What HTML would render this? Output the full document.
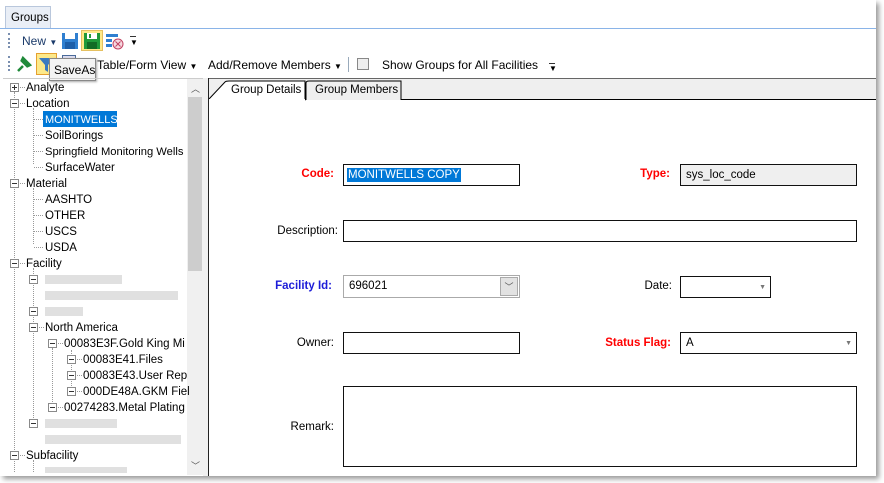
<!DOCTYPE html>
<html><head><meta charset="utf-8"><style>
*{margin:0;padding:0;box-sizing:border-box}
body{width:884px;height:483px;background:#fff;font-family:"Liberation Sans",sans-serif;font-size:12px;color:#000;position:relative;overflow:hidden}
.a{position:absolute;white-space:nowrap}
.t{position:absolute;white-space:nowrap;font-size:11.5px;line-height:14px;margin-top:1px}
.box{position:absolute;width:9px;height:9px;border:1px solid #8a8a8a;background:#fff}
.box:after{content:"";position:absolute;left:1px;top:3px;width:5px;height:1px;background:#333}
.plus:before{content:"";position:absolute;left:3px;top:1px;width:1px;height:5px;background:#333}
.vd{position:absolute;width:0;border-left:1px dotted #999}
.hd{position:absolute;height:0;border-top:1px dotted #999}
.blur{position:absolute;background:#d8d8d8;height:9px;opacity:.8}
.lbl{position:absolute;text-align:right;white-space:nowrap;font-size:11.5px;margin-top:1px}
.in{position:absolute;border:1px solid #111;background:#fff;font-size:11.5px;padding-left:5px;line-height:21px}
.red{color:#f00;font-weight:bold}
.blue{color:#1c1cd8;font-weight:bold}
</style></head><body>
<div class="a" style="left:0;top:0;width:876px;height:476px;box-shadow:3px 3px 5px #999;background:#fff"></div>
<div class="a" style="left:5px;top:6px;width:46px;height:22px;background:#e9eef6;border:1px solid #b9c7dc;border-bottom:none"></div>
<div class="a" style="left:11px;top:12px;font-size:11.5px">Groups</div>
<div class="a" style="left:0;top:28px;width:876px;height:1px;background:#8ab4e8"></div>
<div class="a" style="left:8px;top:33px;width:2px;height:15px;border-left:2px dotted #7a8fb0"></div>
<div class="a" style="left:22px;top:34px;font-size:12px;color:#1a3a6a">New <span style="font-size:8px">▼</span></div>
<svg class="a" style="left:61px;top:32px" width="18" height="18"><rect x="1" y="1" width="16" height="16" fill="#2f7fd0"/><rect x="4" y="1" width="10" height="6" fill="#fff"/><rect x="4" y="10" width="10" height="7" fill="#1d5ea8"/></svg>
<div class="a" style="left:81px;top:30px;width:22px;height:21px;background:#fde98a;border:1px solid #e5c060"></div>
<svg class="a" style="left:83px;top:32px" width="18" height="18"><rect x="1" y="1" width="16" height="16" fill="#1f9a3a"/><rect x="4" y="1" width="10" height="6" fill="#fff"/><rect x="6" y="2" width="2" height="4" fill="#1f9a3a"/><rect x="4" y="10" width="10" height="7" fill="#126b25"/></svg>
<svg class="a" style="left:105px;top:32px" width="20" height="18"><rect x="1" y="2" width="12" height="3" fill="#2f7fd0"/><rect x="1" y="7" width="6" height="3" fill="#2f7fd0"/><rect x="1" y="12" width="6" height="3" fill="#2f7fd0"/><circle cx="13" cy="12" r="5" fill="#f6d9e0" stroke="#c04060"/><path d="M10.5 9.5l5 5M15.5 9.5l-5 5" stroke="#c04060"/></svg>
<div class="a" style="left:130px;top:38px;font-size:8px">▼</div>
<div class="a" style="left:130px;top:36px;width:6px;height:1px;background:#333"></div>
<div class="a" style="left:8px;top:56px;width:2px;height:15px;border-left:2px dotted #7a8fb0"></div>
<svg class="a" style="left:15px;top:55px" width="18" height="18"><path d="M3 16l5-5M6 5l7 7M8 3l7 7-2 1-6-6z" stroke="#1f8a3a" stroke-width="2.5" fill="#3aaa50"/></svg>
<div class="a" style="left:36px;top:53px;width:21px;height:22px;background:#fde98a;border:1px solid #e5a030"></div>
<svg class="a" style="left:38px;top:56px" width="17" height="17"><path d="M1 2h15l-6 7v7l-3-2V9z" fill="#3a7ac0"/></svg>
<div class="a" style="left:62px;top:55px;width:14px;height:14px;border:1px solid #4a6a9a;background:#dde"></div>
<div class="a" style="left:97px;top:58px;font-size:12px">Table/Form View <span style="font-size:8px">▼</span></div>
<div class="a" style="left:208px;top:58px;font-size:12px">Add/Remove Members <span style="font-size:8px">▼</span></div>
<div class="a" style="left:348px;top:57px;width:1px;height:15px;background:#9ab"></div>
<div class="a" style="left:357px;top:58px;width:12px;height:12px;border:1px solid #888;background:#eee"></div>
<div class="a" style="left:382px;top:58px;font-size:12px">Show Groups for All Facilities</div>
<div class="a" style="left:549px;top:64px;font-size:8px">▼</div>
<div class="a" style="left:549px;top:63px;width:6px;height:1px;background:#333"></div>
<div class="a" style="left:49px;top:58px;width:47px;height:23px;background:#f3f3f3;border:1px solid #888;font-size:12px;padding:4px 0 0 4px;box-shadow:1px 1px 2px #aaa">SaveAs</div>
<div class="a" style="left:3px;top:78px;width:200px;height:397px;border-top:1px solid #ccc"></div>
<div class="a" style="left:187px;top:79px;width:16px;height:396px;background:#f0f0f0"></div>
<div class="a" style="left:188px;top:97px;width:14px;height:174px;background:#cdcdcd"></div>
<div class="a" style="left:191px;top:82px;font-size:9px;color:#555">︿</div>
<div class="a" style="left:191px;top:459px;font-size:9px;color:#555">﹀</div>
<div class="a" style="left:203px;top:78px;width:6px;height:398px;background:#f0f0f0"></div>
<div class="a" style="left:208px;top:78px;width:1px;height:398px;background:#222"></div>

<div class="vd" style="left:14px;top:92px;height:380px"></div>
<div class="vd" style="left:33px;top:108px;height:56px"></div>
<div class="vd" style="left:33px;top:188px;height:56px"></div>
<div class="vd" style="left:33px;top:268px;height:160px"></div>
<div class="vd" style="left:52px;top:348px;height:60px"></div>
<div class="vd" style="left:71px;top:350px;height:42px"></div>
<div class="vd" style="left:33px;top:460px;height:12px"></div>

<div class="box plus" style="left:10px;top:83px"></div><div class="hd" style="left:20px;top:87px;width:5px"></div><div class="t" style="left:26px;top:80px">Analyte</div>
<div class="box" style="left:10px;top:99px"></div><div class="hd" style="left:20px;top:103px;width:5px"></div><div class="t" style="left:26px;top:96px">Location</div>
<div class="hd" style="left:34px;top:119px;width:9px"></div><div class="a" style="left:43px;top:111px;width:74px;height:16px;background:#0078d7"></div><div class="t" style="left:45px;top:112px;color:#fff;font-size:11px">MONITWELLS</div>
<div class="hd" style="left:34px;top:135px;width:9px"></div><div class="t" style="left:45px;top:128px">SoilBorings</div>
<div class="hd" style="left:34px;top:151px;width:9px"></div><div class="t" style="left:45px;top:144px;font-size:11.2px">Springfield Monitoring Wells</div>
<div class="hd" style="left:34px;top:167px;width:9px"></div><div class="t" style="left:45px;top:160px">SurfaceWater</div>
<div class="box" style="left:10px;top:179px"></div><div class="hd" style="left:20px;top:183px;width:5px"></div><div class="t" style="left:26px;top:176px">Material</div>
<div class="hd" style="left:34px;top:199px;width:9px"></div><div class="t" style="left:45px;top:192px">AASHTO</div>
<div class="hd" style="left:34px;top:215px;width:9px"></div><div class="t" style="left:45px;top:208px">OTHER</div>
<div class="hd" style="left:34px;top:231px;width:9px"></div><div class="t" style="left:45px;top:224px">USCS</div>
<div class="hd" style="left:34px;top:247px;width:9px"></div><div class="t" style="left:45px;top:240px">USDA</div>
<div class="box" style="left:10px;top:259px"></div><div class="hd" style="left:20px;top:263px;width:5px"></div><div class="t" style="left:26px;top:256px">Facility</div>
<div class="box" style="left:29px;top:275px"></div><div class="blur" style="left:45px;top:275px;width:77px"></div><div class="blur" style="left:45px;top:291px;width:133px"></div>
<div class="box" style="left:29px;top:307px"></div><div class="blur" style="left:45px;top:307px;width:38px"></div>
<div class="box" style="left:29px;top:323px"></div><div class="hd" style="left:39px;top:327px;width:5px"></div><div class="t" style="left:45px;top:320px">North America</div>
<div class="box" style="left:48px;top:339px"></div><div class="hd" style="left:58px;top:343px;width:5px"></div><div class="t" style="left:64px;top:336px">00083E3F.Gold King Mi</div>
<div class="box" style="left:67px;top:355px"></div><div class="hd" style="left:77px;top:359px;width:5px"></div><div class="t" style="left:83px;top:352px">00083E41.Files</div>
<div class="box" style="left:67px;top:371px"></div><div class="hd" style="left:77px;top:375px;width:5px"></div><div class="t" style="left:83px;top:368px">00083E43.User Rep</div>
<div class="box" style="left:67px;top:387px"></div><div class="hd" style="left:77px;top:391px;width:5px"></div><div class="t" style="left:83px;top:384px">000DE48A.GKM Fiel</div>
<div class="box" style="left:48px;top:403px"></div><div class="hd" style="left:58px;top:407px;width:5px"></div><div class="t" style="left:64px;top:400px">00274283.Metal Plating</div>
<div class="box" style="left:29px;top:419px"></div><div class="blur" style="left:45px;top:419px;width:72px"></div><div class="blur" style="left:45px;top:435px;width:136px"></div>
<div class="box" style="left:10px;top:451px"></div><div class="hd" style="left:20px;top:455px;width:5px"></div><div class="t" style="left:26px;top:448px">Subfacility</div>
<div class="blur" style="left:45px;top:467px;width:82px;height:6px"></div>

<div class="a" style="left:209px;top:78px;width:667px;height:22px;background:#efefef;border-top:1px solid #666;border-bottom:1px solid #000"></div>
<svg class="a" style="left:209px;top:79px" width="200" height="22"><path d="M0 20 L16 3 Q17 2 20 2 H96 V21 H0Z" fill="#fff" stroke="#000"/><path d="M97 21 V4 Q97 2 100 2 H192 V21" fill="#efefef" stroke="#000"/><path d="M0 21 H96" stroke="#fff" stroke-width="2"/></svg>
<div class="a" style="left:231px;top:84px;font-size:11.5px">Group Details</div>
<div class="a" style="left:315px;top:84px;font-size:11.5px">Group Members</div>

<div class="lbl red" style="right:550px;top:167px">Code:</div>
<div class="in" style="left:343px;top:164px;width:177px;height:22px;padding-left:3px;line-height:20px"><span style="background:#0078d7;color:#fff;padding:1px 1px">MONITWELLS COPY</span></div>
<div class="lbl red" style="right:214px;top:167px">Type:</div>
<div class="in" style="left:680px;top:164px;width:177px;height:22px;background:#efefef">sys_loc_code</div>
<div class="lbl" style="right:546px;top:224px">Description:</div>
<div class="in" style="left:343px;top:220px;width:514px;height:22px"></div>
<div class="lbl blue" style="right:552px;top:279px">Facility Id:</div>
<div class="in" style="left:343px;top:275px;width:177px;height:23px;border-color:#aaa">696021</div>
<div class="a" style="left:500px;top:277px;width:18px;height:19px;background:#e2e2e2;border:1px solid #aaa;font-size:9px;text-align:center;line-height:18px;color:#555">﹀</div>
<div class="lbl" style="right:212px;top:279px">Date:</div>
<div class="in" style="left:680px;top:276px;width:91px;height:22px"><span style="position:absolute;right:4px;top:0;font-size:7px;color:#777">▼</span></div>
<div class="lbl" style="right:550px;top:336px">Owner:</div>
<div class="in" style="left:343px;top:332px;width:177px;height:22px"></div>
<div class="lbl red" style="right:213px;top:336px">Status Flag:</div>
<div class="in" style="left:680px;top:332px;width:177px;height:22px">A<span style="position:absolute;right:4px;top:0;font-size:7px;color:#777">▼</span></div>
<div class="lbl" style="right:550px;top:420px">Remark:</div>
<div class="in" style="left:343px;top:386px;width:514px;height:81px"></div>
</body></html>
